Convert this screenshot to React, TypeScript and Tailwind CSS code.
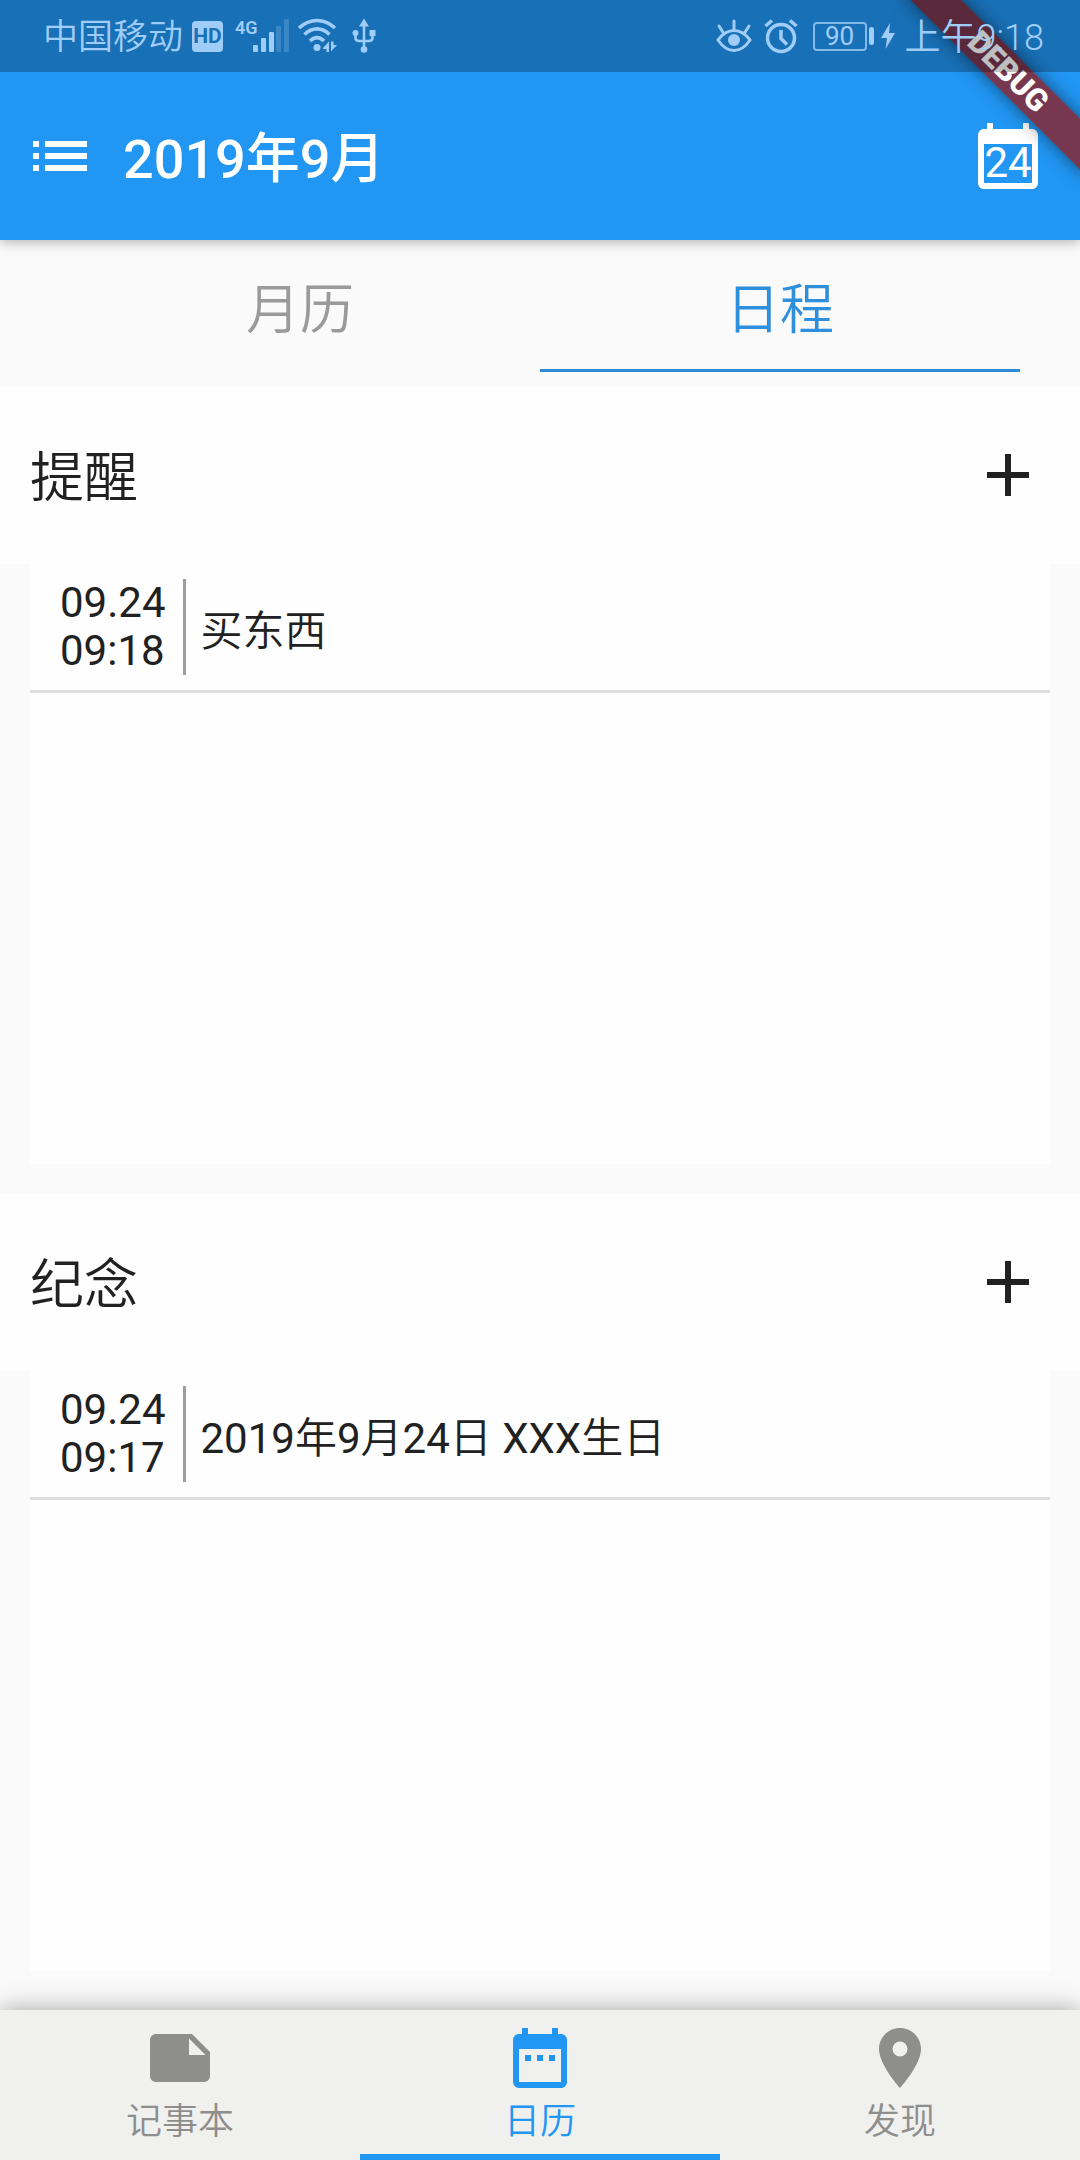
import React from "react";
import { MdAdd, MdCalendarToday, MdDateRange, MdList, MdNote, MdPlace } from "react-icons/md";

type Entry = { date: string; time: string; title: string };

function SignalIcon() {
  return (
    <svg className="w-[54px] h-[36px] overflow-visible" viewBox="0 0 54 36" fill="currentColor" aria-hidden="true">
      <rect x="18" y="27" width="5" height="7" rx="1" />
      <rect x="26" y="20" width="5" height="14" rx="1" />
      <rect x="34" y="14" width="5" height="20" rx="1" />
      <rect x="41" y="8" width="5" height="26" rx="1" opacity="0.25" />
      <rect x="49" y="1" width="5" height="33" rx="1" opacity="0.25" />
      <text x="0" y="16" fontFamily="Roboto, sans-serif" fontWeight="600" fontSize="18">
        4G
      </text>
    </svg>
  );
}

function WifiIcon() {
  return (
    <svg className="w-[40px] h-[36px]" viewBox="0 0 40 36" fill="none" stroke="currentColor" aria-hidden="true">
      <g strokeWidth="3.6">
        <path d="M1 10C12 0 26 0 37 10" />
        <path d="M6.500 16.500C14 9 24 9 31.500 16.500" />
        <path d="M12 23C16.500 18.500 21.500 18.500 26 23" />
      </g>
      <circle cx="19" cy="29.500" r="3.500" fill="currentColor" stroke="none" />
      <path d="M25 30L31 23.500V34h-2.500v-3H25zM33 33.500V23.500h2.500V27H39z" fill="currentColor" stroke="none" />
    </svg>
  );
}

function UsbIcon() {
  return (
    <svg className="w-[24px] h-[36px]" viewBox="0 0 24 36" fill="none" stroke="currentColor" aria-hidden="true">
      <path d="M12 6v26M3.500 15v5q0 3 4 3h9q4 0 4-3v-5" strokeWidth="2.600" />
      <path d="M12 0.500l5 8H7z" fill="currentColor" stroke="none" />
      <circle cx="3.500" cy="15" r="3" fill="currentColor" stroke="none" />
      <rect x="17.500" y="12" width="6" height="6" fill="currentColor" stroke="none" />
      <circle cx="12" cy="31.500" r="3.300" fill="currentColor" stroke="none" />
    </svg>
  );
}

function EyeIcon() {
  return (
    <svg className="w-[36px] h-[36px]" viewBox="0 0 36 36" fill="none" stroke="currentColor" strokeWidth="3" strokeLinecap="round" aria-hidden="true">
      <path d="M2 22Q9 12.500 18 12.500T34 22Q27 32.500 18 32.500T2 22z" />
      <path d="M18 3v8M3 8l4.500 7M33 8l-4.500 7" />
      <circle cx="18" cy="22" r="6" fill="currentColor" stroke="none" />
    </svg>
  );
}

function AlarmIcon() {
  return (
    <svg className="w-[34px] h-[36px]" viewBox="0 0 34 36" fill="none" stroke="currentColor" strokeWidth="3.5" aria-hidden="true">
      <circle cx="17" cy="20" r="13.500" />
      <path d="M17 12v8.500l6 6M1.500 8L8 2.500M32.500 8L26 2.500" />
    </svg>
  );
}

function BoltIcon() {
  return (
    <svg className="w-[14px] h-[28px]" viewBox="0 0 14 28" fill="currentColor" aria-hidden="true">
      <path d="M9 1L0 16h6L4.500 27 14 11H8z" />
    </svg>
  );
}

function StatusBar() {
  return (
    <div className="relative z-20 flex items-center justify-between bg-black/25 h-[72px] pl-[43px] pr-[36px] text-[#9fcdf8] text-[36px] leading-[54px]">
      <div className="flex items-center">
        <span className="pt-[4px] text-[35px]">中国移动</span>
        <span className="ml-[9px] w-[31px] h-[31px] rounded-[4px] bg-[#9fcdf8] text-[#1970b6] text-[21px] leading-[31px] font-bold text-center">
          HD
        </span>
        <span className="ml-[12px]"><SignalIcon /></span>
        <span className="ml-[9px]"><WifiIcon /></span>
        <span className="ml-[14px]"><UsbIcon /></span>
      </div>
      <div className="flex items-center">
        <EyeIcon />
        <span className="ml-[12px]"><AlarmIcon /></span>
        <span className="ml-[15px] w-[54px] h-[29px] rounded-[4px] border-2 border-[#9fcdf8]/80 text-[26px] leading-[25px] text-center">
          90
        </span>
        <span className="ml-[2px] w-[5px] h-[18px] rounded-sm bg-current" />
        <span className="ml-[7px]"><BoltIcon /></span>
        <span className="ml-[10px] pt-[4px] font-light">上午9:18</span>
      </div>
    </div>
  );
}

function DebugBanner() {
  return (
    <div className="absolute right-0 top-0 z-10 w-[200px] h-[200px] overflow-hidden pointer-events-none">
      <div className="absolute left-0 top-[54px] w-[256px] h-[36px] rotate-45 bg-[#7c3146]/95 text-white text-[31px] leading-[36px] font-black text-center shadow-[0_0_18px_rgba(0,0,0,0.5)]">
        DEBUG
      </div>
    </div>
  );
}

function Section({ name, entries }: { name: string; entries: Entry[] }) {
  return (
    <section className="flex-1 flex flex-col pb-[30px]">
      <header className="flex items-center justify-between bg-[#fefefe] h-[177px] pl-[30px] pr-[36px]">
        <h2 className="pt-[6px] text-[54px] leading-[78px] font-normal">{name}</h2>
        <button type="button" aria-label={`添加${name}`} className="pb-[2px]">
          <MdAdd className="w-[72px] h-[72px]" />
        </button>
      </header>
      <ul className="flex-1 mx-[30px] bg-[#fefefe]">
        {entries.map((e) => (
          <li key={e.title} className="flex items-stretch py-[15px] pl-[30px] border-b-[3px] border-[#dfdfdf] text-[42px] leading-[48px]">
            <time className="flex flex-col pr-[17px] border-r-[3px] border-[#9e9e9e]">
              <span>{e.date}</span>
              <span>{e.time}</span>
            </time>
            <span className="self-center pl-[15px] pt-[9px]">{e.title}</span>
          </li>
        ))}
      </ul>
    </section>
  );
}

const tabs = ["月历", "日程"];

const destinations = [
  { label: "记事本", Icon: MdNote },
  { label: "日历", Icon: MdDateRange },
  { label: "发现", Icon: MdPlace },
];

export default function App() {
  const [tab, setTab] = React.useState(1);
  const [page, setPage] = React.useState(1);

  return (
    <div className="min-h-screen flex flex-col bg-[#fafafa] text-[#212121] font-[Roboto,'Noto_Sans_CJK_SC_DemiLight','Noto_Sans_CJK_SC',sans-serif]">
      <header className="relative z-10 bg-[#2196f3] text-white shadow-[0_2px_12px_rgba(0,0,0,0.3)]">
        <StatusBar />
        <div className="flex items-center h-[168px] pl-[24px] pr-[36px]">
          <button type="button" aria-label="菜单">
            <MdList className="w-[72px] h-[72px]" />
          </button>
          <h1 className="ml-[27px] flex-1 pt-[8px] text-[54px] leading-[72px] font-medium font-[Roboto,'Noto_Sans_CJK_SC',sans-serif]">
            2019年9月
          </h1>
          <button type="button" aria-label="今天" className="relative">
            <MdCalendarToday className="w-[72px] h-[72px]" />
            <span className="absolute inset-x-0 top-[19px] text-[42px] leading-[48px] text-center">24</span>
          </button>
        </div>
        <DebugBanner />
      </header>

      <main className="flex-1 flex flex-col pb-[9px]">
        <div role="tablist" className="flex mx-[60px] mb-[15px]">
          {tabs.map((t, i) => (
            <button
              key={t}
              type="button"
              role="tab"
              aria-selected={i === tab}
              onClick={() => setTab(i)}
              className={
                "flex-1 pt-[32px] pb-[19px] border-b-[3px] text-[54px] leading-[78px] " +
                (i === tab ? "border-[#2e8bd4] text-[#2e8fdc]" : "border-transparent text-[#9a9a9a]")
              }
            >
              {t}
            </button>
          ))}
        </div>
        <Section name="提醒" entries={[{ date: "09.24", time: "09:18", title: "买东西" }]} />
        <Section name="纪念" entries={[{ date: "09.24", time: "09:17", title: "2019年9月24日 XXX生日" }]} />
      </main>

      <nav className="relative flex bg-[#f0f0ef] shadow-[0_0_24px_rgba(0,0,0,0.35)]">
        {destinations.map(({ label, Icon }, i) => (
          <button
            key={label}
            type="button"
            aria-current={i === page ? "page" : undefined}
            onClick={() => setPage(i)}
            className={
              "flex-1 flex flex-col items-center pt-[12px] border-b-[6px] " +
              (i === page ? "border-[#2196f3] text-[#2196f3]" : "border-transparent text-[#8e8e8c]")
            }
          >
            <Icon className="w-[72px] h-[72px]" />
            <span className="mt-[4px] mb-[8px] text-[36px] leading-[48px]">{label}</span>
          </button>
        ))}
      </nav>
    </div>
  );
}
